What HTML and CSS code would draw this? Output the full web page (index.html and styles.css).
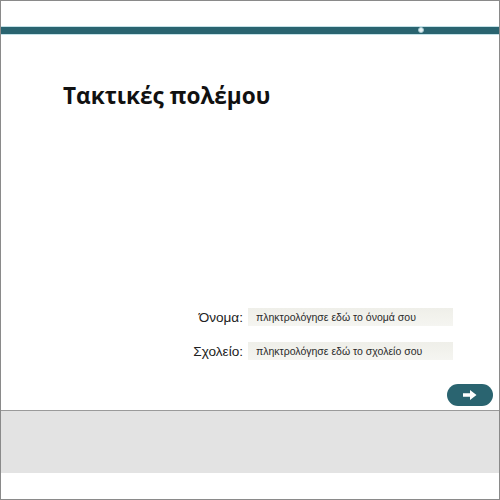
FILE: index.html
```html
<!DOCTYPE html>
<html lang="el">
<head>
<meta charset="utf-8">
<title>Τακτικές πολέμου</title>
<link rel="stylesheet" href="styles.css">
</head>
<body>
<div class="frame">
  <div class="top-space"></div>
  <div class="bar"><span class="dot"></span></div>
  <main class="main">
    <h1 class="title">Τακτικές πολέμου</h1>
    <form class="form">
      <div class="row">
        <label class="label" for="name">Όνομα:</label>
        <input class="field" id="name" type="text" placeholder="πληκτρολόγησε εδώ το όνομά σου">
      </div>
      <div class="row">
        <label class="label" for="school">Σχολείο:</label>
        <input class="field" id="school" type="text" placeholder="πληκτρολόγησε εδώ το σχολείο σου">
      </div>
    </form>
    <div class="actions">
      <button class="next" type="button" aria-label="Επόμενο">
        <svg width="14" height="10" viewBox="0 0 14 10"><path d="M0 3.2H7V0L13.5 5L7 10V6.8H0Z" fill="#fff"/></svg>
      </button>
    </div>
  </main>
  <footer class="footer">
    <div class="footer-gray"></div>
  </footer>
</div>
</body>
</html>
```

FILE: styles.css
```css
html, body {
  margin: 0;
  padding: 0;
  background: #fff;
}
.frame {
  width: 500px;
  height: 500px;
  box-sizing: border-box;
  border: 1px solid #8a8a8a;
  display: flex;
  flex-direction: column;
  font-family: "Liberation Sans", Arial, sans-serif;
}
.top-space {
  height: 25px;
  flex: none;
}
.bar {
  flex: none;
  height: 7px;
  background: #2a6470;
  border-top: 1px solid #c4e2e8;
  border-bottom: 1px solid #c4e2e8;
  position: relative;
}
.dot {
  position: absolute;
  left: 417px;
  top: 0;
  width: 4px;
  height: 4px;
  border-radius: 50%;
  background: #e8f2f4;
  border: 1px solid #9fc4cc;
}
.main {
  flex: none;
  height: 375px;
  display: flex;
  flex-direction: column;
}
.title {
  margin: 46px 0 0 62px;
  font-family: "Open Sans", sans-serif;
  font-weight: 700;
  font-size: 22.6px;
  line-height: 30px;
  color: #111;
}
.form {
  margin: 197px 0 0 0;
  padding-right: 46px;
  display: flex;
  flex-direction: column;
  gap: 16px;
}
.row {
  display: flex;
  justify-content: flex-end;
  align-items: center;
  gap: 5px;
  height: 18px;
}
.label {
  font-size: 13.6px;
  color: #222;
}
.field {
  width: 205px;
  height: 18px;
  box-sizing: border-box;
  border: none;
  padding: 0 0 0 8px;
  margin: 0;
  background: linear-gradient(#efefe9, #f5f5f1);
  font-family: "Liberation Sans", Arial, sans-serif;
  font-size: 10.5px;
  color: #222;
  outline: none;
}
.field::placeholder {
  color: #2a2a2a;
  opacity: 1;
}
.actions {
  margin-top: 24px;
  display: flex;
  justify-content: flex-end;
  padding-right: 6px;
}
.next {
  width: 46px;
  height: 22px;
  border: none;
  border-radius: 11px;
  background: #2a6470;
  display: flex;
  align-items: center;
  justify-content: center;
  padding: 0;
  cursor: pointer;
}
.footer {
  flex: none;
  height: 89px;
  box-sizing: border-box;
  border-top: 1px solid #9a9a9a;
}
.footer-gray {
  height: 62px;
  background: #e3e3e3;
}
```
